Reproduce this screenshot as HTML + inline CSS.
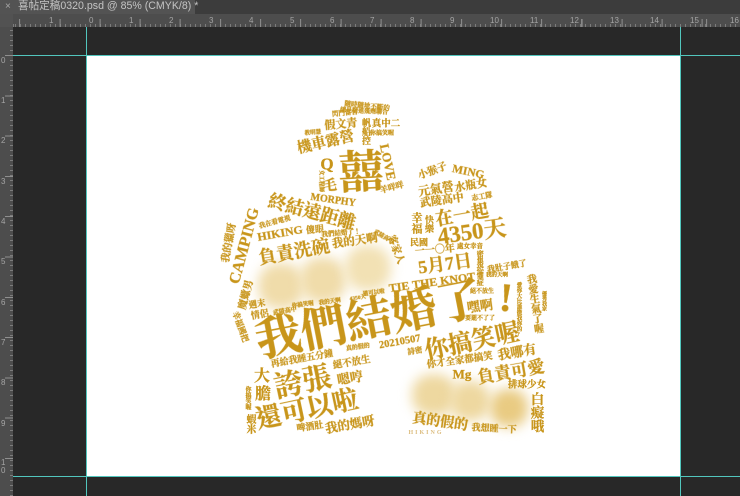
<!DOCTYPE html>
<html><head><meta charset="utf-8">
<style>
html,body{margin:0;padding:0;background:#282828}
#p{position:relative;width:740px;height:496px;overflow:hidden;background:#282828;font-family:"Liberation Sans","Noto Sans CJK TC",sans-serif}
#p div,#p span{position:absolute}
.t{font-family:"Liberation Serif","Noto Serif CJK TC","Noto Serif CJK SC",serif;font-weight:700;color:#c8951a;white-space:nowrap;line-height:1;transform-origin:center;-webkit-text-stroke:.25px #c8951a;filter:blur(.3px)}
.v{writing-mode:vertical-rl;text-orientation:upright}
.r{font-size:8px;color:#a5a5a5;line-height:8px}
.b{border-radius:45%;filter:blur(6px)}
</style></head><body><div id="p">
<div style="left:0;top:0;width:740px;height:14px;background:#3c3c3c"></div>
<div style="left:0;top:0;width:195px;height:14px;background:#535353"></div>
<span style="left:5px;top:1px;font-size:10px;line-height:12px;color:#a8a8a8">×</span>
<span style="left:18px;top:0;font-size:10.6px;line-height:13px;color:#c4c4c4;white-space:nowrap;">喜帖定稿0320.psd @ 85% (CMYK/8) *</span>
<div style="left:0;top:14px;width:740px;height:13px;background:#4d4d4d"></div>
<div style="left:0;top:27px;width:13px;height:469px;background:#4d4d4d"></div>
<div style="left:0;top:14px;width:13px;height:13px;background:#525252"></div>
<div style="left:13px;top:24px;width:727px;height:3px;background:repeating-linear-gradient(90deg,#7c7c7c 0 1px,transparent 1px 5px);background-position:2px 0"></div>
<div style="left:10px;top:27px;width:3px;height:469px;background:repeating-linear-gradient(180deg,#7c7c7c 0 1px,transparent 1px 5px);background-position:0 3px"></div>
<div style="left:13px;top:19px;width:727px;height:8px;background:repeating-linear-gradient(90deg,#8f8f8f 0 1px,transparent 1px 40.15px);background-position:-33.9px 0"></div>
<div style="left:5px;top:55px;width:8px;height:441px;background:repeating-linear-gradient(180deg,#8f8f8f 0 1px,transparent 1px 40.3px)"></div>
<span class="r" style="left:49px;top:17px">1</span><span class="r" style="left:89px;top:17px">0</span><span class="r" style="left:129px;top:17px">1</span><span class="r" style="left:169px;top:17px">2</span><span class="r" style="left:209px;top:17px">3</span><span class="r" style="left:249px;top:17px">4</span><span class="r" style="left:290px;top:17px">5</span><span class="r" style="left:330px;top:17px">6</span><span class="r" style="left:370px;top:17px">7</span><span class="r" style="left:410px;top:17px">8</span><span class="r" style="left:450px;top:17px">9</span><span class="r" style="left:490px;top:17px">10</span><span class="r" style="left:530px;top:17px">11</span><span class="r" style="left:570px;top:17px">12</span><span class="r" style="left:610px;top:17px">13</span><span class="r" style="left:650px;top:17px">14</span><span class="r" style="left:690px;top:17px">15</span><span class="r" style="left:730px;top:17px">16</span>
<span class="r" style="left:1px;top:57px">0</span><span class="r" style="left:1px;top:97px">1</span><span class="r" style="left:1px;top:137px">2</span><span class="r" style="left:1px;top:178px">3</span><span class="r" style="left:1px;top:218px">4</span><span class="r" style="left:1px;top:258px">5</span><span class="r" style="left:1px;top:299px">6</span><span class="r" style="left:1px;top:339px">7</span><span class="r" style="left:1px;top:379px">8</span><span class="r" style="left:1px;top:420px">9</span><span class="r" style="left:1px;top:459px">1</span><span class="r" style="left:1px;top:467px">0</span>
<div style="left:87px;top:55px;width:593px;height:421px;background:#fff"></div>
<div style="left:86px;top:27px;width:1px;height:469px;background:#52c6be"></div>
<div style="left:680px;top:27px;width:1px;height:469px;background:#52c6be"></div>
<div style="left:13px;top:54.5px;width:727px;height:1px;background:#52c6be"></div>
<div style="left:13px;top:476px;width:727px;height:1px;background:#52c6be"></div>

<div class="b" style="left:258px;top:263px;width:46px;height:46px;background:#f0dcaa"></div>
<div class="b" style="left:300px;top:257px;width:46px;height:46px;background:#f0dcaa"></div>
<div class="b" style="left:345px;top:245px;width:46px;height:46px;background:#f2e1b4"></div>
<div class="b" style="left:412px;top:374px;width:44px;height:42px;background:#eed8a0"></div>
<div class="b" style="left:450px;top:381px;width:40px;height:40px;background:#eed8a0"></div>
<div class="b" style="left:490px;top:389px;width:38px;height:38px;background:#e9cb82"></div>

<span class="t" style="left:369px;top:320px;font-size:46px;transform:translate(-50%,-50%) rotate(-11deg)">我們結婚了</span>
<span class="t" style="left:506px;top:298px;font-size:40px;transform:translate(-50%,-50%) rotate(5deg)">!</span>
<span class="t" style="left:361px;top:173px;font-size:45px;transform:translate(-50%,-50%) rotate(-3deg)">囍</span>
<span class="t" style="left:367px;top:107px;font-size:6.5px;transform:translate(-50%,-50%) rotate(6deg)">隨時隨地不斷的</span>
<span class="t" style="left:364px;top:112px;font-size:6px;transform:translate(-50%,-50%) rotate(3deg)">總是精進幾劑聯合</span>
<span class="t" style="left:345px;top:114px;font-size:6.5px;transform:translate(-50%,-50%) rotate(-6deg)">閃門當舍</span>
<span class="t" style="left:341px;top:125px;font-size:11px;transform:translate(-50%,-50%) rotate(-5deg)">假文青</span>
<span class="t v" style="left:361px;top:118px;font-size:9px;">帆船控</span>
<span class="t" style="left:386px;top:125px;font-size:9.5px;transform:translate(-50%,-50%)">真中二</span>
<span class="t" style="left:382px;top:134px;font-size:6px;transform:translate(-50%,-50%)">你搞笑喔</span>
<span class="t" style="left:313px;top:134px;font-size:5.5px;transform:translate(-50%,-50%) rotate(-5deg)">教明慧</span>
<span class="t" style="left:326px;top:143px;font-size:14.5px;transform:translate(-50%,-50%) rotate(-13deg)">機車露營</span>
<span class="t" style="left:327px;top:164px;font-size:17px;transform:translate(-50%,-50%)">Q</span>
<span class="t" style="left:388px;top:162px;font-size:13px;transform:translate(-50%,-50%) rotate(78deg)">LOVE</span>
<span class="t" style="left:330px;top:187px;font-size:14px;transform:translate(-50%,-50%) rotate(-5deg)">毛</span>
<span class="t" style="left:320px;top:181px;font-size:5.5px;transform:translate(-50%,-50%) rotate(90deg)">女工程師</span>
<span class="t" style="left:392px;top:188px;font-size:8px;transform:translate(-50%,-50%) rotate(-15deg)">羊咩咩</span>
<span class="t" style="left:333px;top:201px;font-size:10px;transform:translate(-50%,-50%) rotate(8deg)">MORPHY</span>
<span class="t" style="left:312px;top:212px;font-size:18px;transform:translate(-50%,-50%) rotate(15deg)">終結遠距離</span>
<span class="t" style="left:245px;top:246px;font-size:16px;transform:translate(-50%,-50%) rotate(-75deg)">CAMPING</span>
<span class="t" style="left:275px;top:223px;font-size:6.5px;transform:translate(-50%,-50%) rotate(-15deg)">我在看電視</span>
<span class="t" style="left:280px;top:233px;font-size:12px;transform:translate(-50%,-50%) rotate(-10deg)">HIKING</span>
<span class="t" style="left:315px;top:230px;font-size:9px;transform:translate(-50%,-50%) rotate(-5deg)">傻眼</span>
<span class="t" style="left:341px;top:234px;font-size:6.5px;transform:translate(-50%,-50%) rotate(-5deg)">我們結婚了！</span>
<span class="t" style="left:355px;top:242px;font-size:11.5px;transform:translate(-50%,-50%) rotate(-8deg)">我的天啊</span>
<span class="t" style="left:294px;top:252px;font-size:18px;transform:translate(-50%,-50%) rotate(-10deg)">負責洗碗</span>
<span class="t" style="left:230px;top:243px;font-size:10px;transform:translate(-50%,-50%) rotate(-80deg)">我的獵呀</span>
<span class="t" style="left:383px;top:238px;font-size:5.5px;transform:translate(-50%,-50%) rotate(30deg)">武陵高中</span>
<span class="t" style="left:395px;top:250px;font-size:10px;transform:translate(-50%,-50%) rotate(70deg)">客家人</span>
<span class="t" style="left:433px;top:172px;font-size:10px;transform:translate(-50%,-50%) rotate(-20deg)">小猴子</span>
<span class="t" style="left:468px;top:173px;font-size:11.5px;transform:translate(-50%,-50%) rotate(12deg)">MING</span>
<span class="t" style="left:436px;top:189px;font-size:12px;transform:translate(-50%,-50%) rotate(-9deg)">元氣營</span>
<span class="t" style="left:471px;top:186px;font-size:11px;transform:translate(-50%,-50%) rotate(-10deg)">水瓶女</span>
<span class="t" style="left:442px;top:201px;font-size:11px;transform:translate(-50%,-50%) rotate(-8deg)">武陵高中</span>
<span class="t" style="left:482px;top:197px;font-size:7px;transform:translate(-50%,-50%) rotate(-10deg)">志工隊</span>
<span class="t v" style="left:410px;top:212px;font-size:11px;">幸福</span>
<span class="t v" style="left:424px;top:215px;font-size:9px;">快樂</span>
<span class="t" style="left:462px;top:215px;font-size:18px;transform:translate(-50%,-50%) rotate(-10deg)">在一起</span>
<span class="t" style="left:472px;top:232px;font-size:23px;transform:translate(-50%,-50%) rotate(-8deg)">4350天</span>
<span class="t" style="left:419px;top:243px;font-size:9px;transform:translate(-50%,-50%)">民國</span>
<span class="t" style="left:435px;top:251px;font-size:10px;transform:translate(-50%,-50%) rotate(-5deg)">一一〇年</span>
<span class="t" style="left:470px;top:247px;font-size:6.5px;transform:translate(-50%,-50%)">處女幸音</span>
<span class="t" style="left:445px;top:264px;font-size:18px;transform:translate(-50%,-50%) rotate(-8deg)">5月7日</span>
<span class="t v" style="left:476px;top:250px;font-size:7.2px;">密集恐懼症</span>
<span class="t" style="left:507px;top:267px;font-size:8px;transform:translate(-50%,-50%) rotate(-10deg)">我肚子餓了</span>
<span class="t" style="left:497px;top:276px;font-size:5.5px;transform:translate(-50%,-50%)">我的天啊</span>
<span class="t v" style="left:528px;top:274px;font-size:10px;transform:rotate(-8deg)">我愛生氣了喔</span>
<span class="t v" style="left:515px;top:282px;font-size:5.5px;">愛你大比誰微我你的?</span>
<span class="t v" style="left:541px;top:291px;font-size:5px;">優秀我家</span>
<span class="t" style="left:432px;top:282px;font-size:12px;transform:translate(-50%,-50%) rotate(-8deg)">TIE THE KNOT</span>
<span class="t" style="left:482px;top:292px;font-size:6px;transform:translate(-50%,-50%)">絕不放生</span>
<span class="t" style="left:480px;top:306px;font-size:13px;transform:translate(-50%,-50%) rotate(-8deg)">嘿啊</span>
<span class="t" style="left:480px;top:319px;font-size:6px;transform:translate(-50%,-50%)">要罷不了了</span>
<span class="t" style="left:247px;top:295px;font-size:10px;transform:translate(-50%,-50%) rotate(-75deg)">魔蠍男</span>
<span class="t" style="left:257px;top:304px;font-size:8.5px;transform:translate(-50%,-50%) rotate(-10deg)">週末</span>
<span class="t" style="left:260px;top:315px;font-size:9px;transform:translate(-50%,-50%) rotate(-10deg)">情侶</span>
<span class="t" style="left:240px;top:327px;font-size:8px;transform:translate(-50%,-50%) rotate(70deg)">幸福國把</span>
<span class="t" style="left:285px;top:312px;font-size:6px;transform:translate(-50%,-50%) rotate(-10deg)">武陵高中</span>
<span class="t" style="left:303px;top:306px;font-size:5.5px;transform:translate(-50%,-50%) rotate(-8deg)">你搞笑喔</span>
<span class="t" style="left:330px;top:303px;font-size:5.5px;transform:translate(-50%,-50%) rotate(-8deg)">我的天啊</span>
<span class="t" style="left:358px;top:299px;font-size:5.5px;transform:translate(-50%,-50%) rotate(-8deg)">4350天</span>
<span class="t" style="left:374px;top:294px;font-size:5.5px;transform:translate(-50%,-50%) rotate(-8deg)">還可以啦</span>
<span class="t" style="left:302px;top:359px;font-size:9px;transform:translate(-50%,-50%) rotate(-10deg)">再給我睡五分鐘</span>
<span class="t" style="left:358px;top:348px;font-size:6px;transform:translate(-50%,-50%) rotate(-8deg)">真的假的</span>
<span class="t" style="left:400px;top:343px;font-size:10.5px;transform:translate(-50%,-50%) rotate(-10deg)">20210507</span>
<span class="t" style="left:415px;top:351px;font-size:7.5px;transform:translate(-50%,-50%) rotate(-10deg)">詩密</span>
<span class="t" style="left:262px;top:377px;font-size:16px;transform:translate(-50%,-50%)">大</span>
<span class="t" style="left:263px;top:395px;font-size:16px;transform:translate(-50%,-50%)">膽</span>
<span class="t" style="left:303px;top:383px;font-size:29px;transform:translate(-50%,-50%) rotate(-12deg)">誇張</span>
<span class="t" style="left:352px;top:364px;font-size:9.5px;transform:translate(-50%,-50%) rotate(-10deg)">絕不放生</span>
<span class="t" style="left:350px;top:378px;font-size:13px;transform:translate(-50%,-50%) rotate(-10deg)">嗯哼</span>
<span class="t" style="left:307px;top:410px;font-size:26px;transform:translate(-50%,-50%) rotate(-12deg)">還可以啦</span>
<span class="t v" style="left:244px;top:386px;font-size:6px;">你搞笑喔</span>
<span class="t v" style="left:244px;top:414px;font-size:10px;">蝦米</span>
<span class="t" style="left:310px;top:427px;font-size:9px;transform:translate(-50%,-50%) rotate(-8deg)">啤酒肚</span>
<span class="t" style="left:350px;top:425px;font-size:12.5px;transform:translate(-50%,-50%) rotate(-10deg)">我的媽呀</span>
<span class="t" style="left:472px;top:342px;font-size:24px;transform:translate(-50%,-50%) rotate(-12deg)">你搞笑喔</span>
<span class="t" style="left:460px;top:362px;font-size:9.5px;transform:translate(-50%,-50%) rotate(-8deg)">你才全家都搞笑</span>
<span class="t" style="left:517px;top:352px;font-size:13px;transform:translate(-50%,-50%) rotate(-10deg)">我哪有</span>
<span class="t" style="left:462px;top:374px;font-size:13px;transform:translate(-50%,-50%)">Mg</span>
<span class="t" style="left:511px;top:372px;font-size:17px;transform:translate(-50%,-50%) rotate(-10deg)">負責可愛</span>
<span class="t" style="left:527px;top:386px;font-size:9.5px;transform:translate(-50%,-50%)">排球少女</span>
<span class="t v" style="left:529px;top:392px;font-size:13.5px;">白癡哦</span>
<span class="t" style="left:440px;top:423px;font-size:14px;transform:translate(-50%,-50%) rotate(8deg)">真的假的</span>
<span class="t" style="left:494px;top:429px;font-size:9px;transform:translate(-50%,-50%) rotate(3deg)">我想睡一下</span>
<span class="t" style="left:426px;top:433px;font-size:6px;letter-spacing:2px;color:#dcbd80;-webkit-text-stroke:0;transform:translate(-50%,-50%)">HIKING</span>
</div></body></html>
